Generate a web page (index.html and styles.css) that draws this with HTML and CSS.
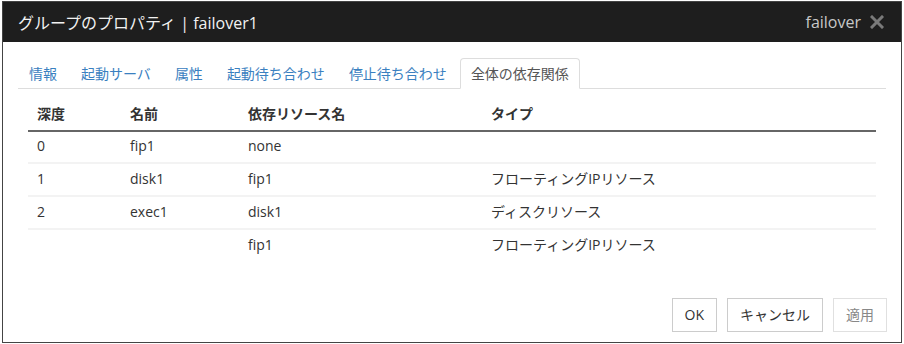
FILE: index.html
```html
<!DOCTYPE html>
<html lang="ja">
<head>
    <meta charset="UTF-8">
    <title>グループのプロパティ | failover1</title>
    <link rel="stylesheet" href="styles.css">
</head>
<body>
    <div class="dialog">
        <header class="dialog-header">
            <h1 class="dialog-title">グループのプロパティ | failover1</h1>
            <span class="dialog-group">failover</span>
            <svg class="dialog-close" width="14" height="14" viewBox="0 0 14 14">
                <path d="M2 2 L12 12 M12 2 L2 12" stroke="#7a7a7a" stroke-width="3" stroke-linecap="square"/>
            </svg>
        </header>
        <main class="dialog-body">
            <ul class="tabs">
                <li><a href="#">情報</a></li>
                <li><a href="#">起動サーバ</a></li>
                <li><a href="#">属性</a></li>
                <li><a href="#">起動待ち合わせ</a></li>
                <li><a href="#">停止待ち合わせ</a></li>
                <li class="active"><a href="#">全体の依存関係</a></li>
            </ul>
            <table class="dep-table">
                <thead>
                    <tr>
                        <th class="col-depth">深度</th>
                        <th class="col-name">名前</th>
                        <th class="col-dep">依存リソース名</th>
                        <th>タイプ</th>
                    </tr>
                </thead>
                <tbody>
                    <tr><td>0</td><td>fip1</td><td>none</td><td></td></tr>
                    <tr><td>1</td><td>disk1</td><td>fip1</td><td>フローティングIPリソース</td></tr>
                    <tr><td>2</td><td>exec1</td><td>disk1</td><td>ディスクリソース</td></tr>
                    <tr><td></td><td></td><td>fip1</td><td>フローティングIPリソース</td></tr>
                </tbody>
            </table>
        </main>
        <footer class="dialog-footer">
            <button type="button">OK</button>
            <button type="button">キャンセル</button>
            <button type="button" class="disabled">適用</button>
        </footer>
    </div>
</body>
</html>
```

FILE: styles.css
```css
body {
    margin: 0;
    background: #fff;
    font-family: "Open Sans", "Noto Sans CJK JP", sans-serif;
    font-size: 14px;
    color: #333;
}
.dialog {
    box-sizing: border-box;
    width: 900px;
    height: 342px;
    margin: 1px 0 0 2px;
    border: 1px solid #444;
    display: flex;
    flex-direction: column;
}
.dialog-header {
    height: 40px;
    background-color: #1e1e1e;
    display: flex;
    align-items: center;
    padding: 0 17px 0 15px;
}
.dialog-title {
    margin: 0;
    flex: 1;
    font-size: 16px;
    font-weight: normal;
    color: #f2f2f2;
}
.dialog-group {
    font-size: 16px;
    color: #c8c8c8;
}
.dialog-close {
    margin-left: 9px;
}
.dialog-body {
    flex: 1;
    padding: 16px 24px 0 15px;
}
.tabs {
    list-style: none;
    margin: 0 -9px 0 0;
    padding: 0;
    display: flex;
    border-bottom: 1px solid #ddd;
}
.tabs li {
    margin-right: 2px;
    margin-bottom: -1px;
}
.tabs a {
    display: block;
    padding: 5px 10px;
    line-height: 19px;
    color: #3a80c0;
    text-decoration: none;
    border: 1px solid transparent;
    border-radius: 4px 4px 0 0;
}
.tabs .active a {
    color: #555;
    background: #fff;
    border-color: #ddd;
    border-bottom-color: #fff;
}
.dep-table {
    width: 848px;
    margin: 9px 0 0 10px;
    border-collapse: collapse;
}
.dep-table th,
.dep-table td {
    text-align: left;
    padding: 6px 8px 6px 9px;
    line-height: 20px;
    height: 20px;
}
.dep-table th {
    font-weight: bold;
    border-bottom: 2px solid #666;
}
.dep-table td {
    border-top: 2px solid #f3f3f3;
    padding-top: 5px;
}
.dep-table tbody tr:first-child td {
    border-top: none;
    padding-top: 4px;
}
.col-depth {
    width: 76px;
}
.col-name {
    width: 101px;
}
.col-dep {
    width: 226px;
}
.dialog-footer {
    display: flex;
    justify-content: flex-end;
    gap: 10px;
    padding: 0 14px 10px 0;
}
.dialog-footer button {
    font-family: inherit;
    font-size: 14px;
    line-height: 20px;
    padding: 6px 12px;
    background: #fff;
    color: #333;
    border: 1px solid #ccc;
    border-radius: 0;
}
.dialog-footer button.disabled {
    color: #888;
    border-color: #e0e0e0;
}
```
